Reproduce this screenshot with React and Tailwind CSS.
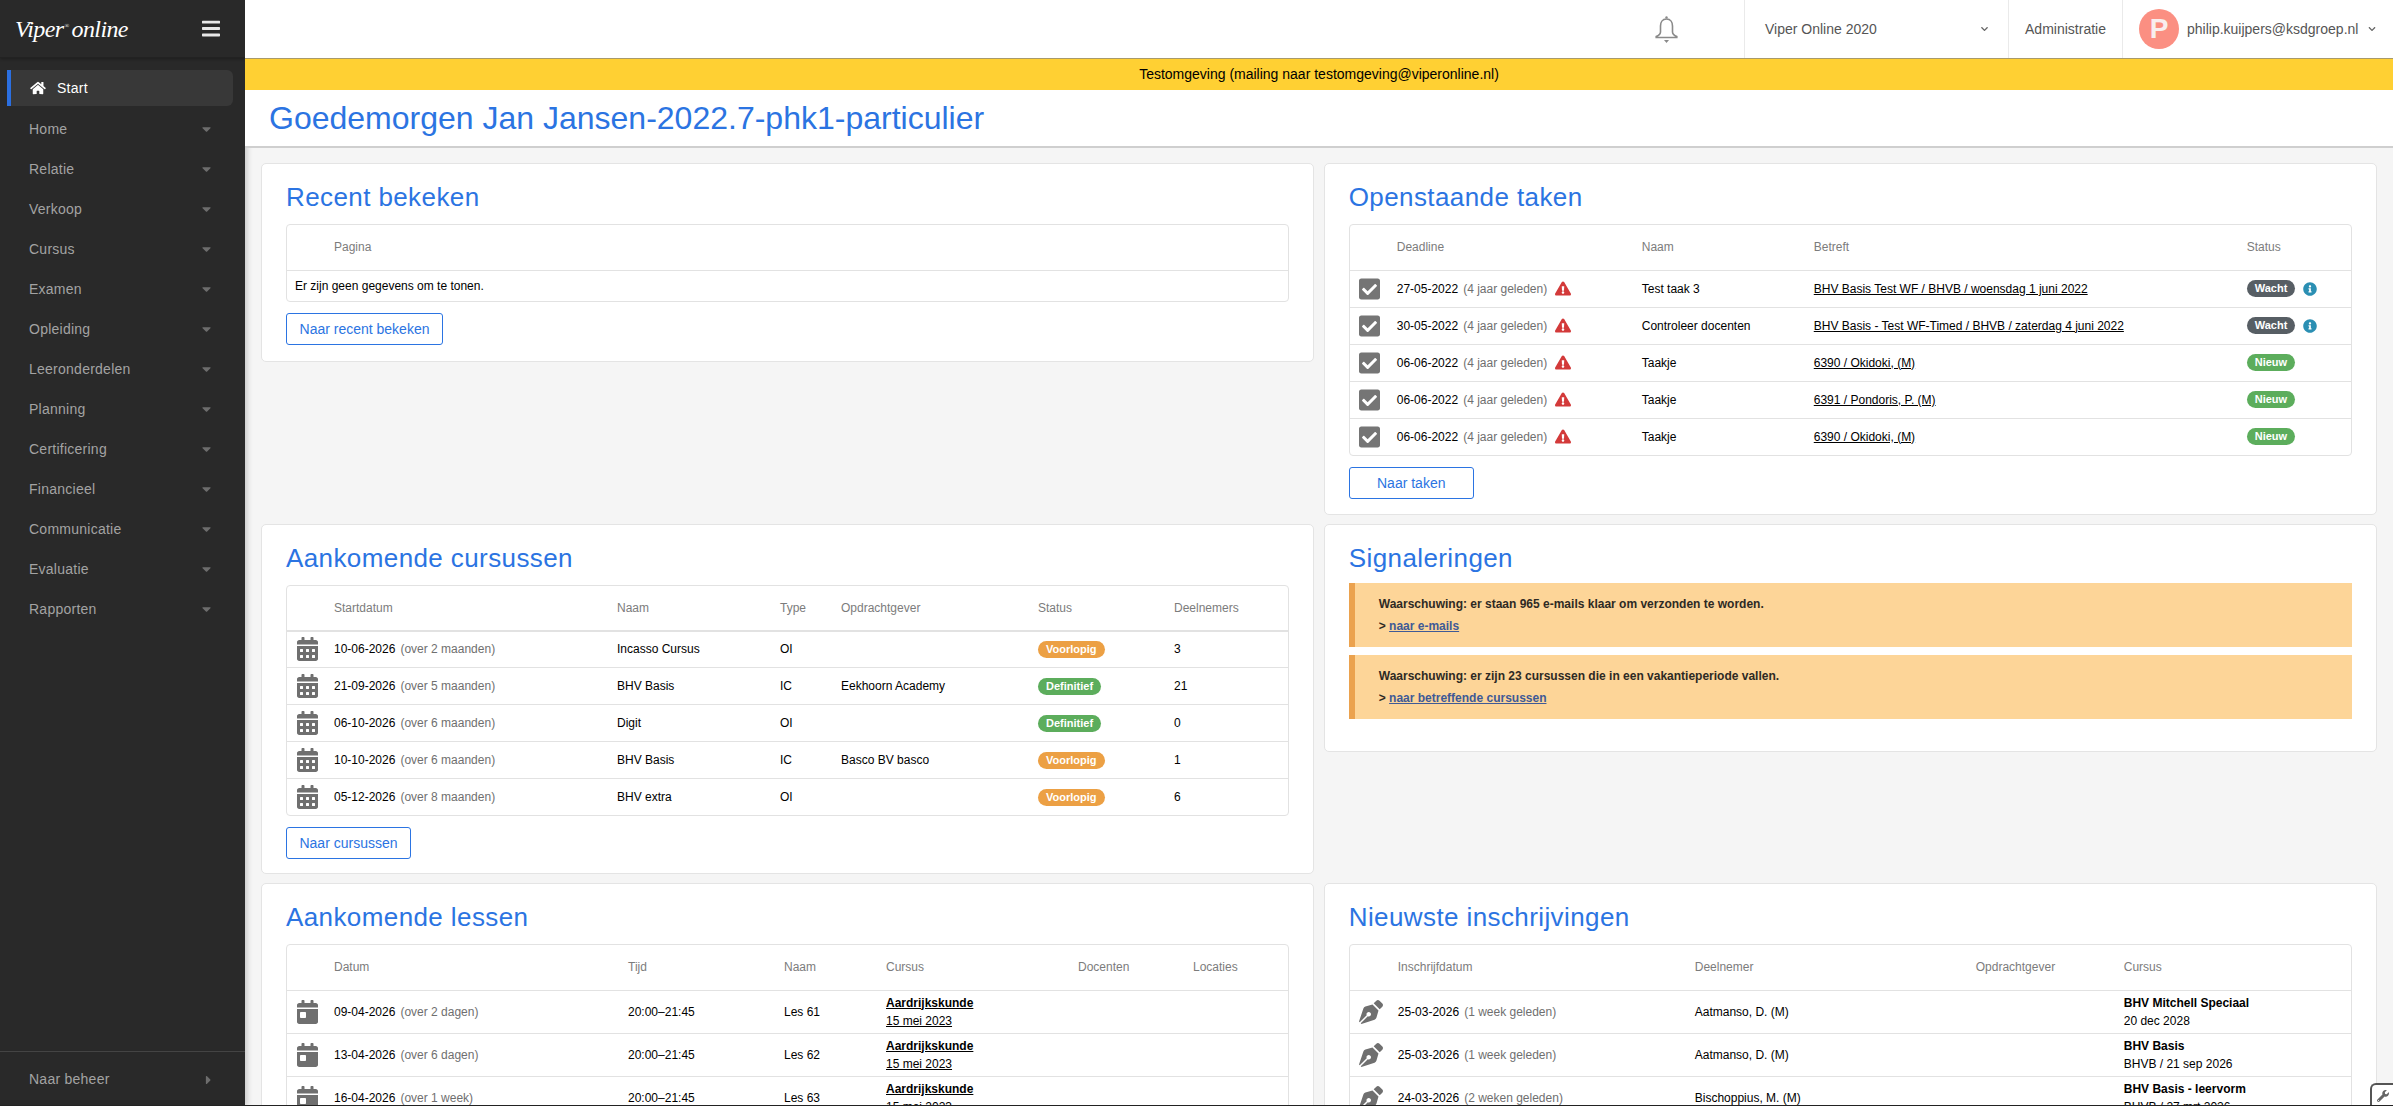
import {
  FaBars,
  FaCalendarAlt,
  FaCalendarDay,
  FaCaretDown,
  FaCaretRight,
  FaCheckSquare,
  FaChevronDown,
  FaExclamationTriangle,
  FaHome,
  FaInfoCircle,
  FaPenNib,
  FaWrench,
} from "react-icons/fa";

const menuItems = [
  "Home",
  "Relatie",
  "Verkoop",
  "Cursus",
  "Examen",
  "Opleiding",
  "Leeronderdelen",
  "Planning",
  "Certificering",
  "Financieel",
  "Communicatie",
  "Evaluatie",
  "Rapporten",
];

const taken = [
  ["27-05-2022", "Test taak 3", "BHV Basis Test WF / BHVB / woensdag 1 juni 2022", "Wacht"],
  ["30-05-2022", "Controleer docenten", "BHV Basis - Test WF-Timed / BHVB / zaterdag 4 juni 2022", "Wacht"],
  ["06-06-2022", "Taakje", "6390 / Okidoki, (M)", "Nieuw"],
  ["06-06-2022", "Taakje", "6391 / Pondoris, P. (M)", "Nieuw"],
  ["06-06-2022", "Taakje", "6390 / Okidoki, (M)", "Nieuw"],
];

const cursussen = [
  ["10-06-2026", "over 2 maanden", "Incasso Cursus", "OI", "", "Voorlopig", "3"],
  ["21-09-2026", "over 5 maanden", "BHV Basis", "IC", "Eekhoorn Academy", "Definitief", "21"],
  ["06-10-2026", "over 6 maanden", "Digit", "OI", "", "Definitief", "0"],
  ["10-10-2026", "over 6 maanden", "BHV Basis", "IC", "Basco BV basco", "Voorlopig", "1"],
  ["05-12-2026", "over 8 maanden", "BHV extra", "OI", "", "Voorlopig", "6"],
];

const lessen = [
  ["09-04-2026", "over 2 dagen", "Les 61"],
  ["13-04-2026", "over 6 dagen", "Les 62"],
  ["16-04-2026", "over 1 week", "Les 63"],
];

const inschrijvingen = [
  ["25-03-2026", "1 week geleden", "Aatmanso, D. (M)", "BHV Mitchell Speciaal", "20 dec 2028"],
  ["25-03-2026", "1 week geleden", "Aatmanso, D. (M)", "BHV Basis", "BHVB / 21 sep 2026"],
  ["24-03-2026", "2 weken geleden", "Bischoppius, M. (M)", "BHV Basis - leervorm", "BHVB / 27 mrt 2026"],
];

const badgeColors = {
  Wacht: "bg-[#575e64]",
  Nieuw: "bg-[#5cad5c]",
  Voorlopig: "bg-[#eca044]",
  Definitief: "bg-[#5cad5c]",
};

function Badge({ label }) {
  return (
    <span className={`inline-block h-[17px] rounded-full px-[8px] text-center text-[11px] font-bold leading-[17px] text-white ${badgeColors[label]}`}>
      {label}
    </span>
  );
}

function Date2({ date, rel }) {
  return (
    <>
      {date}
      <span className="ml-[5px] text-[#6f6f6f]">({rel})</span>
    </>
  );
}

function Card({ title, children, className = "pb-[15px]", head = "h-[60px]" }) {
  return (
    <section className={`rounded-[5px] border border-[#e4e4e4] bg-white px-[24px] ${className}`}>
      <h2 className={`pt-[15px] text-[26px] leading-[36px] tracking-[0.4px] text-[#2b74e2] ${head}`}>{title}</h2>
      {children}
    </section>
  );
}

function DataTable({ widths, heads, children, thick }) {
  return (
    <div className="overflow-hidden rounded-[4px] border border-[#e2e2e2]">
      <table className="w-full table-fixed border-collapse text-[12px] text-black">
        <colgroup>
          {widths.map((w, i) => (
            <col key={i} style={{ width: w }} />
          ))}
        </colgroup>
        <thead>
          <tr className={`h-[45px] border-b-[#e2e2e2] ${thick ? "border-b-2" : "border-b"}`}>
            {heads.map((h, i) => (
              <th key={i} className="px-[8px] pb-[1px] text-left font-normal text-[#7c7c7c]">
                {h}
              </th>
            ))}
          </tr>
        </thead>
        <tbody>{children}</tbody>
      </table>
    </div>
  );
}

function NaarButton({ children, w }) {
  return (
    <button className={`mt-[11px] block h-[32px] rounded-[3px] border border-[#2b74e2] bg-white text-center text-[14px] text-[#2b74e2] ${w}`}>
      {children}
    </button>
  );
}

function Sidebar() {
  return (
    <aside className="flex h-full w-[245px] shrink-0 flex-col bg-[#292929] text-[14px] tracking-[0.25px] shadow-[2px_0_6px_rgba(0,0,0,0.2)]">
      <div className="flex h-[58px] shrink-0 items-center justify-between border-b border-[#222] pl-[15px] pr-[25px] shadow-[0_1px_3px_rgba(0,0,0,0.3)]">
        <span className="font-['Liberation_Serif'] text-[24px] italic leading-none tracking-[-0.6px] text-white">
          Viper<span className="ml-[1px] mr-[3px] align-super text-[6px]">®</span>online
        </span>
        <FaBars className="h-[21px] w-[18px] text-[#e8e8e8]" />
      </div>
      <nav className="flex-1 pt-[10px]">
        <div className="h-[41px] pb-[3px] pl-[7px] pr-[12px] pt-[2px]">
          <a className="flex h-[36px] items-center rounded-r-[6px] border-l-4 border-[#2b6fe0] bg-[#383838] pl-[19px] text-white">
            <FaHome className="h-[14px] w-[16px]" />
            <span className="ml-[11px]">Start</span>
          </a>
        </div>
        {menuItems.map((item) => (
          <a key={item} className="flex h-[40px] items-center justify-between pl-[29px] pr-[34px] text-[#a3a3a3]">
            {item}
            <FaCaretDown className="h-[14px] w-[9px] text-[#6d6d6d]" />
          </a>
        ))}
      </nav>
      <div className="flex h-[55px] shrink-0 items-center justify-between border-t border-[#444] pl-[29px] pr-[33px] pt-[1px] text-[#a3a3a3]">
        Naar beheer
        <FaCaretRight className="h-[14px] w-[7px] text-[#6d6d6d]" />
      </div>
    </aside>
  );
}

function Topbar() {
  return (
    <header className="flex h-[59px] shrink-0 items-stretch justify-end border-b border-[#a89a6a] bg-white text-[14px] text-[#555]">
      <div className="flex w-[90px] items-center justify-start">
        <svg viewBox="0 0 25 28" className="h-[28px] w-[25px]" fill="none" stroke="#8a8a8a" strokeWidth="1.6">
          <path d="M12.5 4c-4.2 0-6 3.4-6 7v6c0 2-2 3.6-4.3 4.6v.9h20.6v-.9C20.500 20.600 18.500 19 18.500 17v-6c0-3.600-1.800-7-6-7z" />
          <circle cx="12.500" cy="2.400" r="1.200" fill="#8a8a8a" stroke="none" />
          <path d="M10 25h5l-2.500 3z" fill="#8a8a8a" stroke="none" />
        </svg>
      </div>
      <div className="flex w-[264px] items-center justify-between border-l border-[#eaeaea] pl-[20px] pr-[19px]">
        Viper Online 2020
        <FaChevronDown className="h-[8px] w-[9px] text-[#666]" />
      </div>
      <div className="flex w-[114px] items-center justify-center border-l border-[#eaeaea]">Administratie</div>
      <div className="flex w-[271px] items-center border-l border-[#eaeaea] pl-[16px]">
        <div className="flex h-[40px] w-[40px] shrink-0 items-center justify-center rounded-full bg-[#fb8f82] text-[28px] font-bold leading-none text-[#f8eeee]">
          P
        </div>
        <span className="ml-[8px] whitespace-nowrap">philip.kuijpers@ksdgroep.nl</span>
        <FaChevronDown className="ml-[10px] h-[8px] w-[8px] shrink-0 text-[#666]" />
      </div>
    </header>
  );
}

function Alert({ text, link }) {
  return (
    <div className="mb-[8px] flex h-[64px] flex-col justify-center gap-[9px] border-l-[6px] border-[#eba24e] bg-[#fdd598] pl-[24px] text-[12px] font-bold leading-[13px] text-[#2e2a24]">
      <div>{text}</div>
      <div>
        &gt; <a className="text-[#3f5a96] underline">{link}</a>
      </div>
    </div>
  );
}

export default function App() {
  return (
    <div className="relative flex h-screen w-full overflow-hidden bg-[#f5f5f5] font-['Liberation_Sans',Arial,sans-serif]">
      <Sidebar />
      <main className="flex min-w-0 flex-1 flex-col">
        <Topbar />
        <div className="h-[31px] shrink-0 bg-[#ffd033] text-center text-[14px] leading-[31px] text-black">
          Testomgeving (mailing naar testomgeving@viperonline.nl)
        </div>
        <div className="h-[58px] shrink-0 border-b-2 border-[#cfcfcf] bg-white pl-[24px] text-[32px] leading-[56px] text-[#2b74e2]">
          Goedemorgen Jan Jansen-2022.7-phk1-particulier
        </div>
        <div className="grid flex-1 grid-cols-2 items-start gap-x-[10px] gap-y-[9px] pb-0 pl-[16px] pr-[16.5px] pt-[15px]">
          <Card title="Recent bekeken" className="pb-[16px]">
            <DataTable widths={["39px", "auto"]} heads={["", "Pagina"]}>
              <tr className="h-[31px]">
                <td colSpan={2} className="px-[8px]">Er zijn geen gegevens om te tonen.</td>
              </tr>
            </DataTable>
            <NaarButton w="w-[157px]">Naar recent bekeken</NaarButton>
          </Card>

          <Card title="Openstaande taken">
            <DataTable
              widths={["39px", "245px", "172px", "433px", "auto"]}
              heads={["", "Deadline", "Naam", "Betreft", "Status"]}
            >
              {taken.map((t, i) => (
                <tr key={i} className="h-[37px] border-t border-[#e2e2e2]">
                  <td className="pl-[9px]">
                    <FaCheckSquare className="h-[24px] w-[21px] text-[#757575]" />
                  </td>
                  <td className="px-[8px]">
                    <div className="flex items-center">
                      <span>
                        <Date2 date={t[0]} rel="4 jaar geleden" />
                      </span>
                      <FaExclamationTriangle className="ml-[8px] h-[15px] w-[16px] text-[#d33a3a]" />
                    </div>
                  </td>
                  <td className="px-[8px]">{t[1]}</td>
                  <td className="whitespace-nowrap px-[8px] underline">{t[2]}</td>
                  <td className="px-[8px]">
                    <div className="flex items-center">
                      <Badge label={t[3]} />
                      {t[3] === "Wacht" && <FaInfoCircle className="ml-[8px] h-[14px] w-[14px] text-[#2b8fb3]" />}
                    </div>
                  </td>
                </tr>
              ))}
            </DataTable>
            <NaarButton w="w-[125px]">Naar taken</NaarButton>
          </Card>

          <Card title="Aankomende cursussen" className="pb-[14px]">
            <DataTable
              thick
              widths={["39px", "283px", "163px", "61px", "197px", "136px", "auto"]}
              heads={["", "Startdatum", "Naam", "Type", "Opdrachtgever", "Status", "Deelnemers"]}
            >
              {cursussen.map((c, i) => (
                <tr key={i} className={`border-t border-[#e2e2e2] ${i === 0 ? "h-[36px]" : "h-[37px]"}`}>
                  <td className="pl-[10px]">
                    <FaCalendarAlt className="h-[24px] w-[21px] text-[#6f6f6f]" />
                  </td>
                  <td className="px-[8px]">
                    <Date2 date={c[0]} rel={c[1]} />
                  </td>
                  <td className="px-[8px]">{c[2]}</td>
                  <td className="px-[8px]">{c[3]}</td>
                  <td className="px-[8px]">{c[4]}</td>
                  <td className="px-[8px]">
                    <Badge label={c[5]} />
                  </td>
                  <td className="px-[8px]">{c[6]}</td>
                </tr>
              ))}
            </DataTable>
            <NaarButton w="w-[125px]">Naar cursussen</NaarButton>
          </Card>

          <Card title="Signaleringen" className="pb-[24px]" head="h-[58px]">
            <Alert text="Waarschuwing: er staan 965 e-mails klaar om verzonden te worden." link="naar e-mails" />
            <Alert text="Waarschuwing: er zijn 23 cursussen die in een vakantieperiode vallen." link="naar betreffende cursussen" />
          </Card>

          <Card title="Aankomende lessen">
            <DataTable
              widths={["39px", "294px", "156px", "102px", "192px", "115px", "auto"]}
              heads={["", "Datum", "Tijd", "Naam", "Cursus", "Docenten", "Locaties"]}
            >
              {lessen.map((l, i) => (
                <tr key={i} className="h-[43px] border-t border-[#e2e2e2]">
                  <td className="pl-[10px]">
                    <FaCalendarDay className="h-[24px] w-[21px] text-[#6f6f6f]" />
                  </td>
                  <td className="px-[8px]">
                    <Date2 date={l[0]} rel={l[1]} />
                  </td>
                  <td className="px-[8px]">20:00–21:45</td>
                  <td className="px-[8px]">{l[2]}</td>
                  <td className="px-[8px] leading-[18px] underline">
                    <div className="font-bold">Aardrijkskunde</div>
                    <div>15 mei 2023</div>
                  </td>
                  <td />
                  <td />
                </tr>
              ))}
            </DataTable>
          </Card>

          <Card title="Nieuwste inschrijvingen">
            <DataTable
              widths={["40px", "297px", "281px", "148px", "auto"]}
              heads={["", "Inschrijfdatum", "Deelnemer", "Opdrachtgever", "Cursus"]}
            >
              {inschrijvingen.map((r, i) => (
                <tr key={i} className="h-[43px] border-t border-[#e2e2e2]">
                  <td className="pl-[9px]">
                    <FaPenNib className="h-[24px] w-[24px] text-[#6f6f6f]" />
                  </td>
                  <td className="px-[8px]">
                    <Date2 date={r[0]} rel={r[1]} />
                  </td>
                  <td className="px-[8px]">{r[2]}</td>
                  <td />
                  <td className="px-[8px] leading-[18px]">
                    <div className="font-bold">{r[3]}</div>
                    <div>{r[4]}</div>
                  </td>
                </tr>
              ))}
            </DataTable>
          </Card>
        </div>
      </main>
      {/* tool knop rechtsonder */}
      <div className="absolute bottom-0 right-0 flex h-[23px] w-[23px] items-center justify-center rounded-tl-[6px] border-2 border-b-0 border-r-0 border-[#555] bg-white">
        <FaWrench className="h-[12px] w-[12px] text-[#666]" />
      </div>
      <div className="absolute bottom-0 left-0 h-[1.5px] w-full bg-[#222]" />
    </div>
  );
}
